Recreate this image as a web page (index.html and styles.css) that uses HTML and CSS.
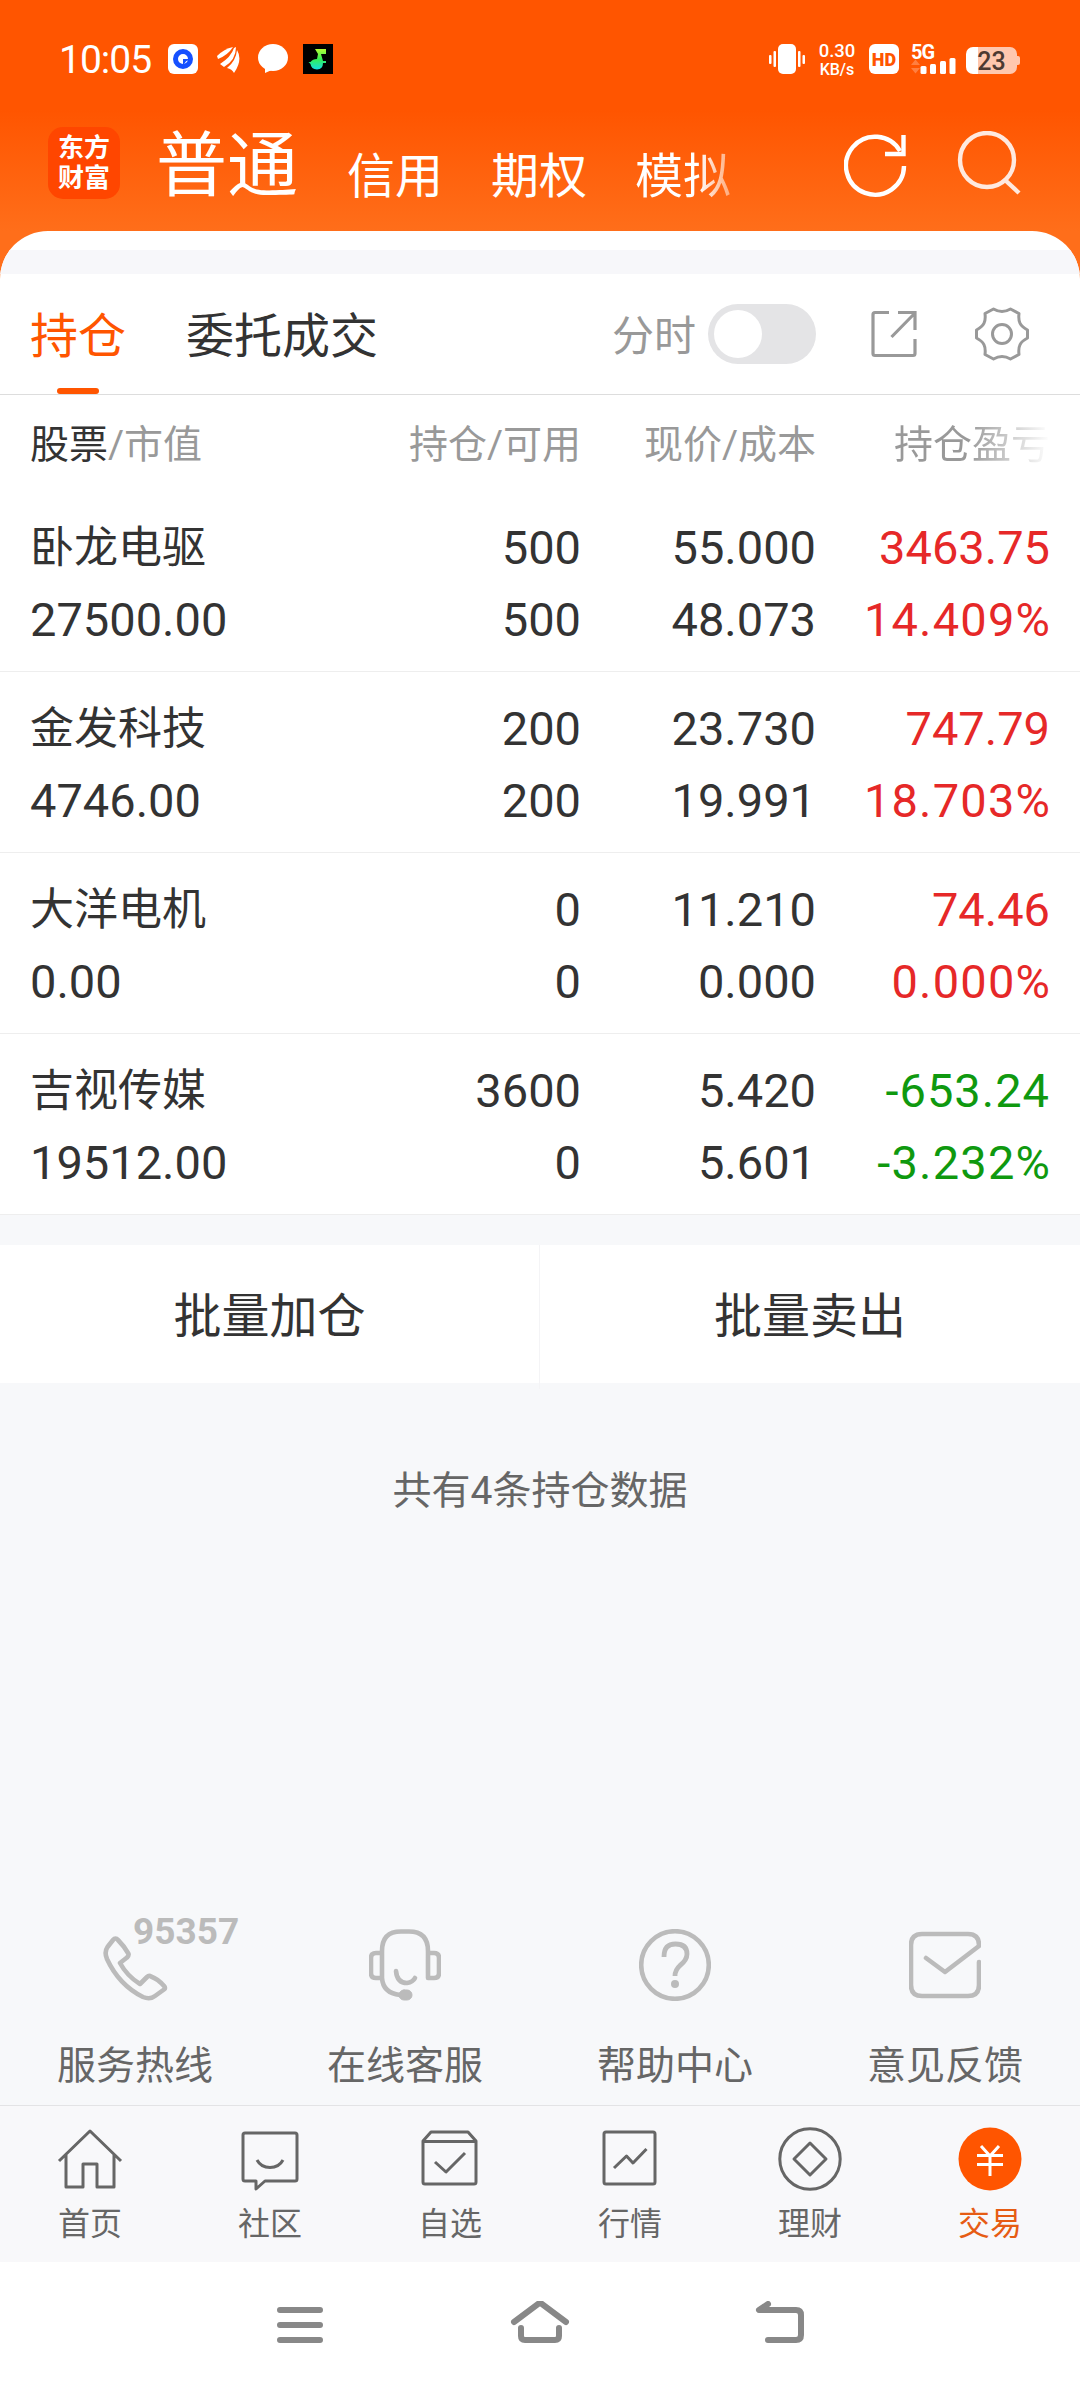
FILE: index.html
```html
<!DOCTYPE html>
<html lang="zh-CN">
<head>
  <meta charset="UTF-8">
  <meta name="viewport" content="width=device-width, initial-scale=1.0"/>
  <title>东方财富 - 交易持仓</title>
  <link rel="stylesheet" href="styles.css">
</head>
<body>
  <header>
    <div class="status">
      <div class="status-left">
        <span class="time">10:05</span>
        <svg class="browser" width="30" height="30" viewBox="0 0 30 30">
          <rect width="30" height="30" rx="6" fill="#fff"/>
          <circle cx="15" cy="15" r="7.500" fill="none" stroke="#1650ff" stroke-width="5"/>
          <path d="M15 15h5v1.500q-2 .3-2.500 1.500t-1.500 2h-1z" fill="#1650ff"/>
        </svg>
        <svg class="wing" width="23" height="27" viewBox="0 0 23 27" fill="#fff">
          <path d="M0 9Q7 2 16 0Q11 8 1 12Z"/>
          <path d="M3 17Q14 10 17 1L19 0Q19 13 7 20Z"/>
          <path d="M10 21Q19 14 20 3Q26 13 17 26Q15 22 10 21Z"/>
        </svg>
        <svg class="chat" width="30" height="30" viewBox="0 0 30 30" fill="#fff">
          <ellipse cx="15" cy="13.500" rx="15" ry="13.500"/>
          <path d="M7 23v6l9-4z"/>
        </svg>
        <svg width="30" height="30" viewBox="0 0 30 30">
          <defs>
            <linearGradient id="note" x1="0" y1="0" x2="0" y2="1">
              <stop offset="0" stop-color="#b4fb35"/>
              <stop offset=".5" stop-color="#35ee55"/>
              <stop offset="1" stop-color="#12dfe0"/>
            </linearGradient>
          </defs>
          <rect width="30" height="30" fill="#000"/>
          <path d="M12 5h11v5h-5l2 7h3v2h-3q0 6-6 6.500q-6-.5-6.500-5.500l-2-2h2q2-3 6.500-3l1-5z" fill="url(#note)"/>
        </svg>
      </div>
      <div class="status-right">
        <svg width="36" height="30" viewBox="0 0 36 30" fill="#fff">
          <rect x="9" width="18" height="30" rx="5"/>
          <rect x="0" y="11" width="2.500" height="9" rx="1"/>
          <rect x="4.500" y="7" width="2.500" height="16" rx="1"/>
          <rect x="29" y="7" width="2.500" height="16" rx="1"/>
          <rect x="33.500" y="11" width="2.500" height="9" rx="1"/>
        </svg>
        <div class="speed"><span>0.30</span><span>KB/s</span></div>
        <div class="hd">HD</div>
        <div class="signal">
          <span>5G</span>
          <svg width="45" height="30" viewBox="0 0 45 30" fill="#fff">
            <path d="M4.500 15.500l4.500 5.500h-9zM4.500 29.500l4.500-5.500h-9z" opacity=".25"/>
            <rect x="9.500" y="22" width="6" height="8" rx="1.500"/>
            <rect x="19" y="20" width="6" height="10" rx="1.500"/>
            <rect x="29" y="17" width="6" height="13" rx="1.500"/>
            <rect x="38.500" y="14" width="6" height="16" rx="1.500"/>
          </svg>
        </div>
        <div class="battery">23</div>
      </div>
    </div>
    <div class="top">
      <div class="logo"><span>东方</span><span>财富</span></div>
      <nav class="accounts">
        <span class="current">普通</span>
        <span>信用</span>
        <span>期权</span>
        <span class="fade">模拟</span>
      </nav>
      <svg class="refresh" width="64" height="66" viewBox="0 0 64 66" fill="none" stroke="#fff" stroke-width="4.400">
        <path d="M60 34A29 29 0 1 1 56 19"/>
        <path d="M41 22H59.500V3"/>
      </svg>
      <svg class="search" width="64" height="66" viewBox="0 0 64 66" fill="none" stroke="#ffe9df" stroke-width="4.400">
        <circle cx="30" cy="29" r="27"/>
        <path d="M48 49L62 62"/>
      </svg>
    </div>
  </header>

  <main>
    <div class="band"></div>
    <div class="tabs">
      <span class="tab active">持仓</span>
      <span class="tab">委托成交</span>
      <span class="switch-label">分时</span>
      <span class="switch"></span>
      <svg class="share" width="46" height="48" viewBox="0 0 46 48" fill="none" stroke="#999" stroke-width="3.200">
        <path d="M18 2.500H4Q2 2.500 2 4.500V43.500Q2 45.500 4 45.500H42Q44 45.500 44 43.500V29"/>
        <path d="M27 2.500H44V20M44 3L20.500 27"/>
      </svg>
      <svg class="gear" width="54" height="54" viewBox="0 0 54 54" fill="none" stroke="#999" stroke-width="3">
        <path d="M18.500 2Q27 7 35.500 2L44 6.500C43 15 45 19 52.500 23V31C45 35 43 39 44 47.500L35.500 52Q27 47 18.500 52L10 47.500C11 39 9 35 1.500 31V23C9 19 11 15 10 6.500Z" stroke-linejoin="round"/>
        <circle cx="27" cy="27" r="9.500"/>
      </svg>
    </div>

    <div class="row head">
      <div><b>股票</b>/市值</div>
      <div>持仓/可用</div>
      <div>现价/成本</div>
      <div><span class="cut">持仓盈亏</span></div>
    </div>
    <div class="row">
      <div><span class="name">卧龙电驱</span><span>27500.00</span></div>
      <div><span>500</span><span>500</span></div>
      <div><span>55.000</span><span>48.073</span></div>
      <div class="up"><span>3463.75</span><span class="rate">14.409%</span></div>
    </div>
    <div class="row">
      <div><span class="name">金发科技</span><span>4746.00</span></div>
      <div><span>200</span><span>200</span></div>
      <div><span>23.730</span><span>19.991</span></div>
      <div class="up"><span>747.79</span><span class="rate">18.703%</span></div>
    </div>
    <div class="row">
      <div><span class="name">大洋电机</span><span>0.00</span></div>
      <div><span>0</span><span>0</span></div>
      <div><span>11.210</span><span>0.000</span></div>
      <div class="up"><span>74.46</span><span class="rate">0.000%</span></div>
    </div>
    <div class="row">
      <div><span class="name">吉视传媒</span><span>19512.00</span></div>
      <div><span>3600</span><span>0</span></div>
      <div><span>5.420</span><span>5.601</span></div>
      <div class="down"><span>-653.24</span><span class="rate">-3.232%</span></div>
    </div>
  </main>

  <div class="batch">
    <div>批量加仓</div>
    <div>批量卖出</div>
  </div>
  <p class="total">共有4条持仓数据</p>

  <section class="service">
    <div>
      <div class="hotline">
        <svg width="72" height="72" viewBox="0 0 72 72">
          <path d="M19 11Q16.500 8 14 11L8.500 18Q5 23 8 30Q20 56 44 68Q51 71 56 67L65 60.500Q67 59 65 57Q59 50 52 47.500Q50 46 48 48L41 55Q28 47 21 34L28 28.500Q30.500 26 29 24Q25 17 19 11Z"/>
        </svg>
        <span>95357</span>
      </div>
      <p>服务热线</p>
    </div>
    <div>
      <svg width="72" height="72" viewBox="0 0 72 72">
        <path d="M13 50V22Q13 2.500 32 2.500H40Q59 2.500 59 22V49H65Q70 49 70 44V29Q70 24 65 24H59M13 24H7Q2 24 2 29V44Q2 49 7 49H13Q14 64 31 66"/>
        <path d="M27 42Q28 54 38 54Q44 53 46 49"/>
        <rect x="30" y="61" width="13" height="10" rx="5" fill="#bbb" stroke-width="1"/>
      </svg>
      <p>在线客服</p>
    </div>
    <div>
      <svg width="72" height="72" viewBox="0 0 72 72">
        <circle cx="36" cy="36" r="33.800"/>
        <path d="M25 28Q25 15 36.500 15Q48 15 48 25Q48 31 41 36.500Q36 41 36 47" stroke-linecap="butt" stroke-width="4.800"/>
        <circle cx="36" cy="55" r="4" fill="#bbb" stroke="none"/>
      </svg>
      <p>帮助中心</p>
    </div>
    <div>
      <svg width="72" height="72" viewBox="0 0 72 72">
        <path d="M17 29L36 43L70 17V16Q70 5 59 5H13Q2 5 2 16V56Q2 67 13 67H59Q70 67 70 56V33"/>
      </svg>
      <p>意见反馈</p>
    </div>
  </section>

  <nav class="tabbar">
    <div>
      <svg width="66" height="66" viewBox="0 0 66 66">
        <path d="M2 35L33 5L64 35M9 29V61H26V38H40V61H57V29"/>
      </svg>
      <span>首页</span>
    </div>
    <div>
      <svg width="66" height="66" viewBox="0 0 66 66">
        <path d="M8 7H58Q60 7 60 9V53Q60 55 58 55H28L19 63V55H8Q6 55 6 53V9Q6 7 8 7ZM20 34Q24 41.500 33 41.500Q42 41.500 46 34"/>
      </svg>
      <span>社区</span>
    </div>
    <div>
      <svg width="66" height="66" viewBox="0 0 66 66">
        <path d="M6 15L14 6H51L59 15V56Q59 58 57 58H8Q6 58 6 56ZM6 15.500H59M18 36L29 46L48 27"/>
      </svg>
      <span>自选</span>
    </div>
    <div>
      <svg width="66" height="66" viewBox="0 0 66 66">
        <rect x="7" y="6" width="51" height="52" rx="2"/>
        <path d="M17 42L29.500 30L36 37L49.500 23"/>
      </svg>
      <span>行情</span>
    </div>
    <div>
      <svg width="66" height="66" viewBox="0 0 66 66">
        <circle cx="33" cy="33" r="30.200"/>
        <path d="M33 17L49 33L33 49L17 33Z"/>
      </svg>
      <span>理财</span>
    </div>
    <div class="on">
      <svg width="66" height="66" viewBox="0 0 66 66">
        <circle cx="33" cy="33" r="31.500" class="coin"/>
        <path d="M24 20L33 30L42 20M33 30V50M20 29.500H46M20 38.500H46" class="yen"/>
      </svg>
      <span>交易</span>
    </div>
  </nav>

  <footer>
    <svg width="60" height="48" viewBox="0 0 60 48"><path d="M10 9H50M10 24H50M10 39H50"/></svg>
    <svg width="60" height="48" viewBox="0 0 60 48"><path d="M4 21L30 1.500L56 21M11 27V35Q11 39 15 39H45Q49 39 49 35V27"/></svg>
    <svg width="60" height="48" viewBox="0 0 60 48"><path d="M18 3L9 9H46Q51 9 51 14V34Q51 39 46 39H18"/></svg>
  </footer>
</body>
</html>
```
FILE: styles.css
```css
* {
  box-sizing: border-box;
}
body {
  margin: 0;
  width: 1080px;
  height: 2388px;
  display: flex;
  flex-direction: column;
  overflow: hidden;
  background: #f7f8fa;
  color: #333;
  font-family: Roboto, "Noto Sans CJK SC", sans-serif;
}
svg {
  display: block;
  flex: none;
}
p {
  margin: 0;
}
header {
  height: 280px;
  flex: none;
  color: #fff;
  background: linear-gradient(#ff5500 110px, #ff6e1a 231px);
}

/* 状态栏 */
.status {
  height: 120px;
  padding: 44px 60px 0;
  display: flex;
  justify-content: space-between;
}
.status-left,
.status-right {
  display: flex;
  height: 30px;
}
.time {
  width: 109px;
  margin-left: -1px;
  font-size: 39px;
  line-height: 32px;
  letter-spacing: -1px;
}
.browser {
  margin-right: 19px;
}
.wing {
  margin: 3px 18px 0 0;
}
.chat {
  margin-right: 15px;
}
.speed {
  width: 38px;
  margin: 0 13px;
  font-size: 18.5px;
  font-weight: 500;
  line-height: 15px;
  text-align: center;
}
.speed span {
  display: block;
}
.speed span + span {
  padding-top: 3px;
  font-size: 16px;
}
.hd {
  width: 30px;
  height: 30px;
  border-radius: 6px;
  background: #fff;
  color: #ff5500;
  font-size: 18px;
  font-weight: 900;
  line-height: 31px;
  text-align: center;
}
.signal {
  position: relative;
  margin: 0 10px 0 12px;
}
.signal span {
  position: absolute;
  top: -1px;
  left: 0;
  font-size: 20px;
  font-weight: bold;
  line-height: 18px;
  letter-spacing: -1px;
}
.battery {
  position: relative;
  width: 51px;
  height: 27px;
  margin: 3px 3px 0 0;
  border-radius: 7px;
  background: linear-gradient(90deg, #fff 12px, #ffc7ae 12px);
  color: #4d3a32;
  font-size: 25px;
  font-weight: 500;
  line-height: 29px;
  text-align: center;
}
.battery::after {
  content: "";
  position: absolute;
  top: 9px;
  right: -3px;
  width: 3px;
  height: 9px;
  border-radius: 0 2px 2px 0;
  background: #ffc7ae;
}

/* 顶部账户 */
.top {
  height: 111px;
  padding: 7px 59px 0 48px;
  display: flex;
}
.logo {
  width: 72px;
  height: 72px;
  padding-top: 6px;
  border-radius: 15px;
  background: #ff4600;
  font-size: 26px;
  font-weight: bold;
  line-height: 30px;
  text-align: center;
}
.logo span {
  display: block;
}
.accounts {
  flex: 1;
  display: flex;
  margin-left: 36px;
  font-size: 48px;
  line-height: 99px;
}
.accounts span {
  margin-right: 48px;
}
.accounts .current {
  margin-right: 49px;
  font-size: 71px;
  line-height: 77px;
}
.accounts .fade {
  background: linear-gradient(90deg, #fff 65%, #ffa877 100%);
  -webkit-background-clip: text;
  background-clip: text;
  color: transparent;
}
.refresh {
  margin: 5px 49px 0 0;
}
.search {
  margin-top: 4px;
}

/* 持仓 */
main {
  flex: none;
  height: 984px;
  margin-top: -49px;
  border-radius: 48px 48px 0 0;
  background: #fff;
  overflow: hidden;
}
.band {
  height: 24px;
  margin-top: 19px;
  background: #f7f7fa;
}
.tabs {
  height: 121px;
  padding-left: 30px;
  display: flex;
  border-bottom: 1px solid #ddd;
}
.tab {
  position: relative;
  margin-right: 60px;
  font-size: 48px;
  line-height: 125px;
}
.active {
  color: #ff5500;
}
.active::after {
  content: "";
  position: absolute;
  bottom: 0;
  left: 27px;
  width: 42px;
  height: 6px;
  border-radius: 3px;
  background: #ff5500;
}
.switch-label {
  margin-left: auto;
  color: #999;
  font-size: 42px;
  line-height: 125px;
}
.switch {
  width: 108px;
  height: 60px;
  margin: 30px 55px 0 12px;
  padding: 6px;
  border-radius: 30px;
  background: #e4e4e6;
}
.switch::before {
  content: "";
  display: block;
  width: 48px;
  height: 48px;
  border-radius: 50%;
  background: #fff;
}
.share {
  margin: 36px 58px 0 0;
}
.gear {
  margin: 33px 51px 0 0;
}
.row {
  height: 181px;
  padding: 21px 30px 0;
  display: grid;
  grid-template-columns: 1fr 235px 235px 234px;
  border-bottom: 1px solid #eee;
  font-size: 47px;
  line-height: 72px;
}
.row div + div {
  text-align: right;
}
.row div > span {
  display: block;
}
.row .name {
  font-size: 44px;
}
.row .rate {
  letter-spacing: 1.2px;
  margin-right: -1.2px;
}
.head {
  height: 96px;
  padding-top: 14px;
  border: 0;
  color: #999;
  font-size: 39px;
}
.head b {
  color: #333;
  font-weight: normal;
}
.cut {
  background: linear-gradient(90deg, #999 65%, #fff 100%);
  -webkit-background-clip: text;
  background-clip: text;
  color: transparent;
}
.up {
  color: #e62828;
}
.down {
  color: #0f990f;
  letter-spacing: 1px;
}

.batch {
  flex: none;
  height: 138px;
  margin-top: 30px;
  display: grid;
  grid-template-columns: 1fr 1fr;
  background: #fff;
  font-size: 48px;
  line-height: 144px;
  text-align: center;
}
.batch div:first-child {
  border-right: 1px solid #f4f4f6;
}
.total {
  margin-top: 72px;
  color: #666;
  font-size: 39px;
  line-height: 72px;
  text-align: center;
}

/* 客服 */
.service {
  height: 176px;
  margin-top: auto;
  flex: none;
  display: grid;
  grid-template-columns: repeat(4, 1fr);
  justify-items: center;
  color: #666;
  font-size: 39px;
  line-height: 60px;
  text-align: center;
}
.service svg {
  margin: 0 auto;
  fill: none;
  stroke: #bbb;
  stroke-width: 4.6;
  stroke-linecap: round;
  stroke-linejoin: round;
}
.service p {
  margin-top: 35px;
}
.hotline {
  position: relative;
}
.hotline span {
  position: absolute;
  top: -19px;
  left: 76px;
  color: #bbb;
  font-size: 37px;
  font-weight: bold;
  line-height: 44px;
}

/* 底部导航 */
.tabbar {
  flex: none;
  height: 157px;
  padding-top: 20px;
  display: grid;
  grid-template-columns: repeat(6, 1fr);
  border-top: 1px solid #e3e3e5;
  background: #f8f8fa;
  color: #666;
  font-size: 32px;
  line-height: 64px;
  text-align: center;
}
.tabbar svg {
  margin: 0 auto;
  fill: none;
  stroke: #666;
  stroke-width: 3;
  stroke-linejoin: round;
}
.tabbar .on {
  color: #e65c14;
}
.tabbar .coin {
  fill: #ff5500;
  stroke: none;
}
.tabbar .yen {
  stroke: #fff;
}
footer {
  flex: none;
  height: 126px;
  padding: 39px 270px 0;
  display: flex;
  justify-content: space-between;
  background: #fff;
}
footer svg {
  fill: none;
  stroke: #888;
  stroke-width: 6;
  stroke-linecap: round;
  stroke-linejoin: round;
}
```
